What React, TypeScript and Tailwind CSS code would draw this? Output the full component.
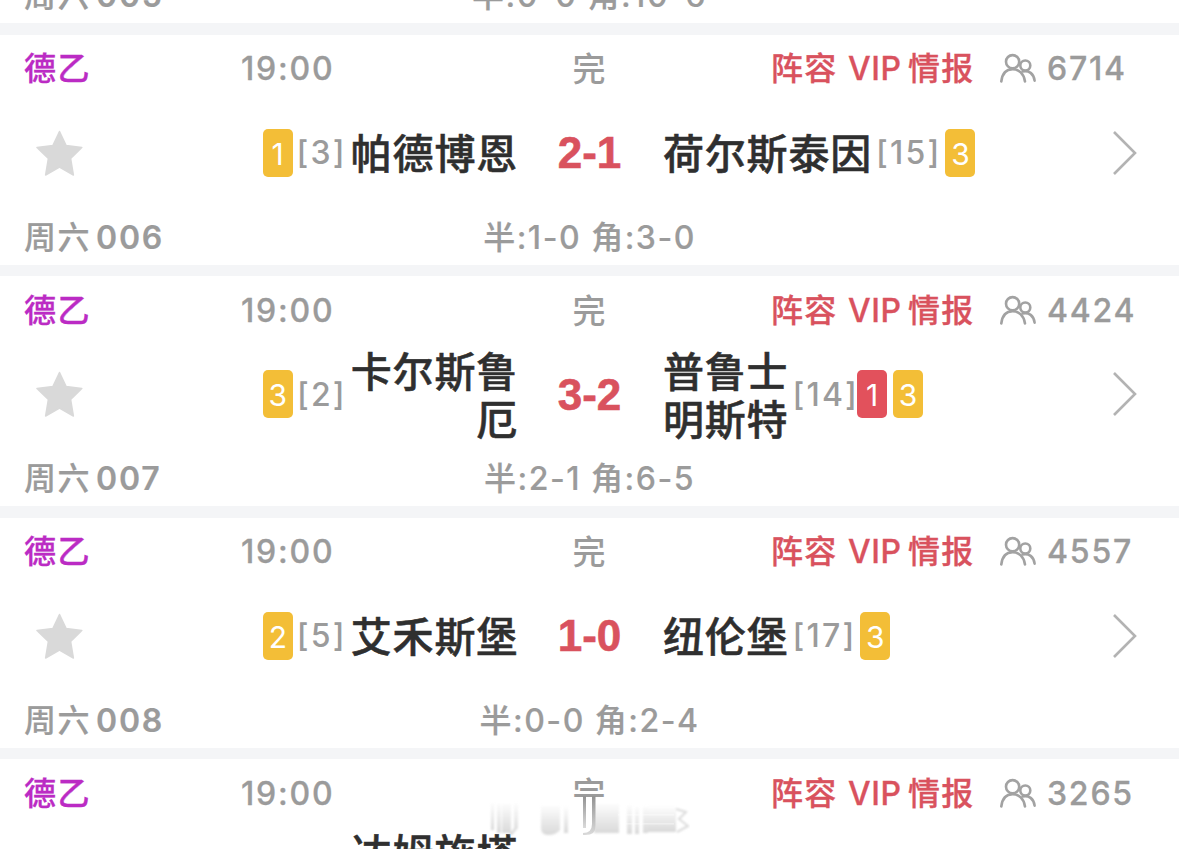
import React from 'react';

interface Team {
  name: string;
  rank: number;
  yellow?: number;
  red?: number;
}

interface Match {
  id: string;
  score: string;
  half: string;
  corner: string;
  viewers: string;
  home: Team;
  away: Team;
}

const matches: Match[] = [
  {
    id: '006',
    score: '2-1',
    half: '1-0',
    corner: '3-0',
    viewers: '6714',
    home: { name: '帕德博恩', rank: 3, yellow: 1 },
    away: { name: '荷尔斯泰因', rank: 15, yellow: 3 },
  },
  {
    id: '007',
    score: '3-2',
    half: '2-1',
    corner: '6-5',
    viewers: '4424',
    home: { name: '卡尔斯鲁\n厄', rank: 2, yellow: 3 },
    away: { name: '普鲁士\n明斯特', rank: 14, red: 1, yellow: 3 },
  },
  {
    id: '008',
    score: '1-0',
    half: '0-0',
    corner: '2-4',
    viewers: '4557',
    home: { name: '艾禾斯堡', rank: 5, yellow: 2 },
    away: { name: '纽伦堡', rank: 17, yellow: 3 },
  },
];

function Viewers() {
  return (
    <svg width="38" height="32" viewBox="0 0 38 32" fill="none" stroke="#a2a2a2" strokeWidth="2.6" strokeLinecap="round">
      <circle cx="13.6" cy="8.7" r="6.6" />
      <path d="M2.3 28.5C3.2 20.5 7.5 16.2 13.6 16.2S25 20.5 26 28.5" />
      <circle cx="26.3" cy="12.5" r="5" />
      <path d="M23.6 18.4C30 17 34.6 20.6 35.6 27.6" />
    </svg>
  );
}

function Star() {
  return (
    <svg width="48" height="46" viewBox="0 0 48 46" fill="#d9d9d9" stroke="#d9d9d9" strokeWidth="1.5" strokeLinejoin="round">
      <path d="M24.5 1.5L31 15.4L46.8 17.4L35.6 28.4L38.4 45L24.5 37L10.6 45L13.4 28.4L2 17.4L18 15.4Z" />
    </svg>
  );
}

function Chevron() {
  return (
    <svg width="26" height="46" viewBox="0 0 26 46" fill="none" stroke="#b3b3b3" strokeWidth="2.6">
      <path d="M2 2L23 23L2 44" />
    </svg>
  );
}

function Card({ count, red }: { count: number; red?: boolean }) {
  return (
    <span
      className={
        'flex h-12 w-[30px] shrink-0 items-center justify-center rounded-[5px] pt-0.5 text-[30px] font-normal leading-none text-white ' +
        (red ? 'bg-[#e2515c]' : 'bg-[#f3be37]')
      }
    >
      {count}
    </span>
  );
}

function Rank({ value }: { value: number }) {
  return <span className="text-[32px] tracking-[2.2px] text-[#9b9b9b]">[{value}]</span>;
}

function Name({ children }: { children: string }) {
  return (
    <span className="whitespace-pre text-[41px] font-medium leading-[48px] tracking-[0.8px] text-[#2f2f2f] [-webkit-text-stroke:0.5px_#2f2f2f]">
      {children}
    </span>
  );
}

function Header({ viewers }: { viewers: string }) {
  return (
    <div className="grid h-[68px] grid-cols-[241px_276px_144px_110px_1fr] items-center whitespace-nowrap pt-px leading-10">
      <span className="pl-6 tracking-[1.5px] text-[#bb2bc4] [-webkit-text-stroke:0.3px_#bb2bc4]">德乙</span>
      <span className="tracking-[1.8px] [-webkit-text-stroke:0.3px_#9b9b9b]">19:00</span>
      <span className="text-center text-[33px]">完</span>
      <span />
      <div className="flex items-center text-[#d9525e] [-webkit-text-stroke:0.3px_#d9525e]">
        <span className="w-[77px] tracking-[1.2px]">阵容</span>
        <span className="w-[60px] tracking-[0.6px]">VIP</span>
        <span className="w-[91px] tracking-[1.2px]">情报</span>
        <Viewers />
        <span className="ml-[10px] tracking-[1.8px] text-[#9b9b9b] [-webkit-text-stroke:0.3px_#9b9b9b]">{viewers}</span>
      </div>
    </div>
  );
}

function Footer({ id, half, corner }: { id: string; half: string; corner: string }) {
  return (
    <div className="grid h-[62px] grid-cols-[438px_303px_1fr] items-center whitespace-nowrap pt-2 leading-10 [-webkit-text-stroke:0.2px_#9b9b9b]">
      <div className="flex pl-6">
        <span className="w-[72px] tracking-[1.5px]">周六</span>
        <span className="font-semibold tracking-[1.8px]">{id}</span>
      </div>
      <span className="text-center tracking-[1.5px]">
        半:{half} 角:{corner}
      </span>
    </div>
  );
}

function MatchRow({ match }: { match: Match }) {
  const { home, away } = match;
  return (
    <section className="bg-white">
      <div className="h-[230px]">
        <Header viewers={match.viewers} />
        <div className="grid h-[100px] grid-cols-[100px_418px_143px_1fr_67px] items-center">
          <div className="pl-[35px]">
            <Star />
          </div>
          <div className="flex items-center justify-end">
            {home.yellow && <Card count={home.yellow} />}
            <span className="ml-1 mr-1 pt-px">
              <Rank value={home.rank} />
            </span>
            <div className="flex pt-[3px] text-right">
              <Name>{home.name}</Name>
            </div>
          </div>
          <span className="pt-px text-center font-['Liberation_Sans'] text-[44px] font-bold text-[#d9525e] [-webkit-text-stroke:0.6px_#d9525e]">
            {match.score}
          </span>
          <div className="flex items-center pl-0.5">
            <div className="flex pt-[3px]">
              <Name>{away.name}</Name>
            </div>
            <span className={away.red ? 'ml-1 -mr-0.5 pt-px' : 'ml-1 mr-1 pt-px'}>
              <Rank value={away.rank} />
            </span>
            <div className="flex gap-1.5">
              {away.red && <Card count={away.red} red />}
              {away.yellow && <Card count={away.yellow} />}
            </div>
          </div>
          <Chevron />
        </div>
        <Footer id={match.id} half={match.half} corner={match.corner} />
      </div>
      <div className="h-[11.5px] bg-[#f4f5f7]" />
    </section>
  );
}

// Faded stamp lying over the last row
function Watermark() {
  return (
    <svg className="absolute left-[480px] top-[794px]" width="220" height="48" viewBox="0 0 220 48">
      <defs>
        <linearGradient id="fade" x1="0" y1="0" x2="0" y2="1">
          <stop offset="0" stopColor="#cccccc" stopOpacity="0" />
          <stop offset="1" stopColor="#cccccc" stopOpacity="0.75" />
        </linearGradient>
        <linearGradient id="leg" x1="0" y1="0" x2="0" y2="1">
          <stop offset="0" stopColor="#929292" />
          <stop offset="1" stopColor="#dadada" />
        </linearGradient>
        <filter id="soft">
          <feGaussianBlur stdDeviation="0.9" />
        </filter>
      </defs>
      <rect x="90" y="3" width="38" height="20" fill="#fff" />
      <g fill="url(#fade)" filter="url(#soft)">
        <rect x="11" y="8" width="3" height="28" />
        <rect x="17" y="8" width="4" height="31" />
        <rect x="22" y="8" width="9" height="31" />
        <path d="M34 8H38V34L32 41H29L34 34Z" />
        <path d="M61 10H80V36Q76 41 68 41Q61 41 61 34Z" />
        <rect x="84" y="12" width="4" height="27" />
        <rect x="114" y="8" width="25" height="31" />
        <rect x="147" y="10" width="5" height="30" />
        <rect x="155" y="12" width="4" height="28" />
        <rect x="163" y="11" width="5" height="28" />
        <rect x="168" y="12" width="28" height="26" />
      </g>
      <g fill="#fff" opacity="0.4">
        <rect x="138" y="20" width="56" height="1.5" />
        <rect x="146" y="29" width="48" height="1.5" />
      </g>
      <rect x="103" y="2" width="3" height="32" fill="url(#leg)" />
      <path d="M112 2H115.500V32Q116 42 103 41V39Q112 39 112 30Z" fill="url(#leg)" />
      <path d="M196 15L206 18L199 25L208 32L197 38" fill="none" stroke="#dcdcdc" strokeWidth="2" filter="url(#soft)" />
    </svg>
  );
}

export default function App() {
  return (
    <main className="relative h-[849px] w-[1179px] overflow-hidden bg-white font-['Inter','Noto_Sans_CJK_SC',sans-serif] text-[32px] font-medium text-[#9b9b9b]">
      <div className="flex h-[34.7px] flex-col justify-end overflow-hidden border-b-[12px] border-[#f4f5f7]">
        <div className="h-[62px] shrink-0">
          <Footer id="005" half="0-0" corner="10-6" />
        </div>
      </div>
      {matches.map((match) => (
        <MatchRow key={match.id} match={match} />
      ))}
      <section>
        <Header viewers="3265" />
        <div className="flex w-[518px] justify-end pt-[3px]">
          <Name>达姆施塔</Name>
        </div>
      </section>
      <Watermark />
    </main>
  );
}
